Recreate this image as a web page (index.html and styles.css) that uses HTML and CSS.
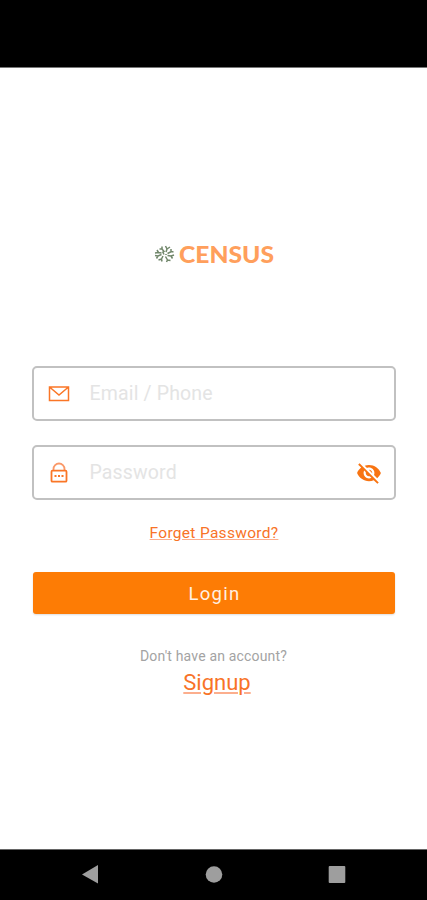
FILE: index.html
```html
<!DOCTYPE html>
<html lang="en">
  <head>
    <meta charset="utf-8" />
    <title>Census</title>
    <link rel="stylesheet" href="styles.css">
  </head>
  <body>
    <div class="status-bar"></div>
    <main>
      <svg class="logo" width="126" height="32" viewBox="-2 -4 126 32">
        <g class="burst">
          <path d="M11.500 10L9 7V4.500M9 7H6.500M13 10l1-3-1.500-3M14 7l3-2M14.500 11.500l4-2 2 .5M18 9.500V7M14.500 13.500l3.500.5 3-1M18 14l1.500 2.500M12.500 14.500l2 3.500-1 2M14.500 18l3 .5M10 14l-1.500 3 .500 2.500M8.500 17l-3 1M8.500 12.500L5 14l-3-.5M5 14l-1.500 2.500M8.500 11L5.500 10.500 2 11M5.500 10.500L4 8M9.500 9.500L11 12.500M13 12v1" />
        </g>
        <text x="26" y="20.500" textLength="95" lengthAdjust="spacingAndGlyphs">CENSUS</text>
      </svg>
      <form>
        <label class="field">
          <svg class="mail" width="22" height="18" viewBox="0 0 22 18">
            <path d="M1.5 2h19v13.500h-19zM1.500 2l9.500 8 9.500-8" />
          </svg>
          <input type="text" placeholder="Email / Phone" />
        </label>
        <label class="field">
          <svg class="lock" width="22" height="22" viewBox="0 0 22 22">
            <path class="shackle" d="M5.500 8.500V7a5.500 5.500 0 0 1 11 0v1.500" />
            <rect x="3.500" y="8.700" width="15" height="11" rx="1" />
            <path d="M6.500 14h2M10 14h2M13.500 14h2" />
          </svg>
          <input type="password" placeholder="Password" />
          <svg class="eye" width="26" height="26" viewBox="0 0 24 24">
            <path d="M12 7c2.760 0 5 2.240 5 5 0 .650-.130 1.260-.360 1.830l2.920 2.920c1.510-1.260 2.700-2.890 3.430-4.750-1.730-4.390-6-7.500-11-7.500-1.400 0-2.740.250-3.980.700l2.160 2.160C10.740 7.130 11.350 7 12 7zM2 4.270l2.280 2.280.460.460C3.080 8.300 1.780 10.020 1 12c1.730 4.390 6 7.500 11 7.500 1.550 0 3.030-.300 4.380-.840l.420.420L19.730 22 21 20.730 3.270 3 2 4.270zM7.530 9.800l1.550 1.550c-.050.210-.080.430-.080.650 0 1.660 1.340 3 3 3 .220 0 .440-.030.650-.080l1.550 1.550c-.670.330-1.410.530-2.200.530-2.760 0-5-2.240-5-5 0-.790.200-1.530.530-2.200zm4.310-.780l3.150 3.150.020-.160c0-1.660-1.340-3-3-3l-.170.010z" />
          </svg>
        </label>
        <a class="forget" href="#">Forget Password?</a>
        <button type="button">Login</button>
      </form>
      <p>Don't have an account?</p>
      <a class="signup" href="#">Signup</a>
    </main>
    <nav>
      <svg width="18" height="20" viewBox="0 0 18 20"><path d="M1 10.500L17 1v18.500z" /></svg>
      <svg width="18" height="20" viewBox="0 0 18 20"><circle cx="9" cy="10.500" r="8.300" /></svg>
      <svg width="18" height="20" viewBox="0 0 18 20"><rect x=".7" y="2" width="16.600" height="17" rx="1" /></svg>
    </nav>
  </body>
</html>
```

FILE: styles.css
```css
* {
  box-sizing: border-box;
}
body {
  margin: 0;
  height: 900px;
  display: flex;
  flex-direction: column;
  background: #fff;
  font-family: Roboto, sans-serif;
}
.status-bar {
  height: 68px;
  background: #000;
  border-bottom: 1px solid #777;
}
main {
  flex: 1;
  display: flex;
  flex-direction: column;
  align-items: center;
  padding: 170px 32px 0;
}
.logo {
  flex: none;
}
.logo text {
  font: 900 22px Lato, sans-serif;
  fill: #ff9f5c;
}
.burst {
  fill: none;
  stroke: #71876b;
  stroke-width: 1.5;
}
form {
  width: 100%;
  margin-top: 96px;
  display: flex;
  flex-direction: column;
  align-items: center;
}
.field {
  width: 364px;
  height: 55px;
  margin-bottom: 24px;
  padding: 0 12px 0 14px;
  display: flex;
  align-items: center;
  border: 2px solid #c1c1c1;
  border-radius: 5px;
}
.field svg {
  flex: none;
}
.mail,
.lock {
  fill: none;
  stroke: #fa7626;
  stroke-width: 1.5;
}
.lock {
  stroke-width: 1.8;
}
.shackle {
  stroke: #fa9868;
}
.eye {
  fill: #f87412;
}
input {
  flex: 1;
  min-width: 0;
  margin-left: 20px;
  padding: 0;
  border: 0;
  outline: 0;
  background: none;
  font: 19.5px Roboto, sans-serif;
  letter-spacing: 0.15px;
}
input::placeholder {
  color: #e4e4e4;
}
a {
  color: #f87327;
}
.forget {
  margin: -1px 0 0 1px;
  font-size: 15.5px;
  line-height: 20px;
  letter-spacing: 0.3px;
  text-decoration-color: #fcae8d;
}
button {
  width: 362px;
  height: 42px;
  margin-top: 29px;
  padding: 1px 0 0 2px;
  border: 0;
  border-radius: 3px;
  background: #fd7c05;
  box-shadow: 0 1px 2px #ddd;
  color: #fff0e2;
  font: 18.5px Roboto, sans-serif;
  letter-spacing: 1.3px;
}
p {
  margin: 33px 0 0;
  color: #a3a3a3;
  font-size: 14px;
  line-height: 18px;
  letter-spacing: 0.18px;
}
.signup {
  margin: 4px 0 0 7px;
  font-size: 22px;
  line-height: 28px;
  text-decoration-color: #fcae8d;
}
nav {
  height: 51px;
  padding: 0 81px 2px;
  display: flex;
  align-items: center;
  justify-content: space-between;
  background: #000;
  border-top: 1px solid #666;
  fill: #9e9e9e;
}
```
